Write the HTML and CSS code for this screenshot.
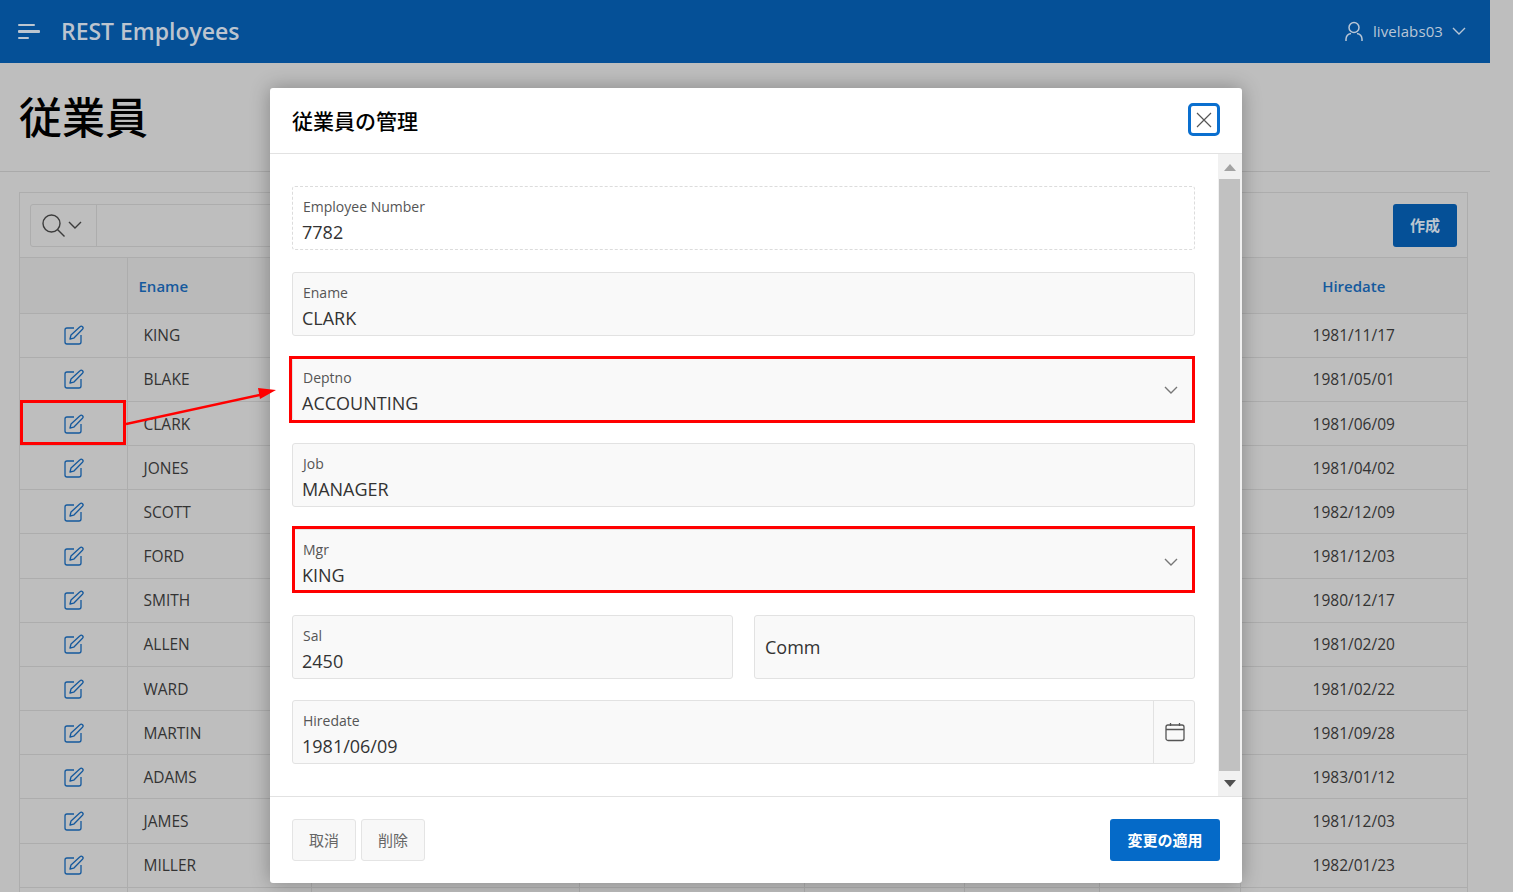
FILE: index.html
```html
<!DOCTYPE html>
<html lang="ja">
<head>
    <meta charset="UTF-8">
    <title>REST Employees</title>
    <link rel="stylesheet" href="styles.css">
</head>
<body>

<svg class="defs" width="0" height="0">
    <symbol id="edit" viewBox="0 0 20 20">
        <path d="M10 3H3a2 2 0 0 0-2 2v12a2 2 0 0 0 2 2h12a2 2 0 0 0 2-2v-7" fill="none" stroke="currentColor" stroke-width="1.3"/>
        <path d="M6 14l1-4 9-8.200a1.700 1.700 0 0 1 2.500 2.500l-8.800 8.900z" fill="none" stroke="currentColor" stroke-width="1.3" stroke-linejoin="round"/>
    </symbol>
    <symbol id="chevron" viewBox="0 0 14 8">
        <path d="M1 1l6 6 6-6" fill="none" stroke="currentColor" stroke-width="1.400"/>
    </symbol>
</svg>

<div class="page">
    <header class="topbar">
        <div class="menu-icon"><span></span><span></span><span></span></div>
        <span class="app-name">REST Employees</span>
        <div class="user">
            <svg class="user-icon" viewBox="0 0 18 20" width="18" height="20">
                <circle cx="9" cy="6.500" r="5" fill="none" stroke="currentColor" stroke-width="1.500"/>
                <path d="M1 20v-2a6 6 0 0 1 5-5.500M17 20v-2a6 6 0 0 0-5-5.500" fill="none" stroke="currentColor" stroke-width="1.500"/>
            </svg>
            <span class="user-name">livelabs03</span>
            <svg class="user-chevron"><use href="#chevron"/></svg>
        </div>
    </header>

    <div class="title-bar">
        <h1>従業員</h1>
    </div>

    <section class="report">
        <div class="toolbar">
            <div class="search">
                <div class="search-btn">
                    <svg viewBox="0 0 24 24" width="24" height="24">
                        <circle cx="10.500" cy="10.500" r="8.500" fill="none" stroke="#3c3c3c" stroke-width="1.400"/>
                        <path d="M16.500 16.500l7 7" stroke="#3c3c3c" stroke-width="1.400"/>
                    </svg>
                    <svg class="search-chevron"><use href="#chevron"/></svg>
                </div>
            </div>
            <a class="create-btn">作成</a>
        </div>
        <table class="grid">
            <colgroup>
                <col class="c-edit"><col class="c-ename"><col class="c-3"><col class="c-4">
                <col class="c-5"><col class="c-6"><col class="c-7"><col class="c-date">
            </colgroup>
            <thead>
                <tr>
                    <th></th><th class="left">Ename</th><th></th><th></th><th></th><th></th><th></th><th>Hiredate</th>
                </tr>
            </thead>
            <tbody>
                <tr><td class="ic"><svg><use href="#edit"/></svg></td><td class="name">KING</td><td></td><td></td><td></td><td></td><td></td><td>1981/11/17</td></tr>
                <tr><td class="ic"><svg><use href="#edit"/></svg></td><td class="name">BLAKE</td><td></td><td></td><td></td><td></td><td></td><td>1981/05/01</td></tr>
                <tr><td class="ic"><svg><use href="#edit"/></svg></td><td class="name">CLARK</td><td></td><td></td><td></td><td></td><td></td><td>1981/06/09</td></tr>
                <tr><td class="ic"><svg><use href="#edit"/></svg></td><td class="name">JONES</td><td></td><td></td><td></td><td></td><td></td><td>1981/04/02</td></tr>
                <tr><td class="ic"><svg><use href="#edit"/></svg></td><td class="name">SCOTT</td><td></td><td></td><td></td><td></td><td></td><td>1982/12/09</td></tr>
                <tr><td class="ic"><svg><use href="#edit"/></svg></td><td class="name">FORD</td><td></td><td></td><td></td><td></td><td></td><td>1981/12/03</td></tr>
                <tr><td class="ic"><svg><use href="#edit"/></svg></td><td class="name">SMITH</td><td></td><td></td><td></td><td></td><td></td><td>1980/12/17</td></tr>
                <tr><td class="ic"><svg><use href="#edit"/></svg></td><td class="name">ALLEN</td><td></td><td></td><td></td><td></td><td></td><td>1981/02/20</td></tr>
                <tr><td class="ic"><svg><use href="#edit"/></svg></td><td class="name">WARD</td><td></td><td></td><td></td><td></td><td></td><td>1981/02/22</td></tr>
                <tr><td class="ic"><svg><use href="#edit"/></svg></td><td class="name">MARTIN</td><td></td><td></td><td></td><td></td><td></td><td>1981/09/28</td></tr>
                <tr><td class="ic"><svg><use href="#edit"/></svg></td><td class="name">ADAMS</td><td></td><td></td><td></td><td></td><td></td><td>1983/01/12</td></tr>
                <tr><td class="ic"><svg><use href="#edit"/></svg></td><td class="name">JAMES</td><td></td><td></td><td></td><td></td><td></td><td>1981/12/03</td></tr>
                <tr><td class="ic"><svg><use href="#edit"/></svg></td><td class="name">MILLER</td><td></td><td></td><td></td><td></td><td></td><td>1982/01/23</td></tr>
                <tr><td></td><td></td><td></td><td></td><td></td><td></td><td></td><td></td></tr>
            </tbody>
        </table>
    </section>
</div>

<div class="modal">
    <div class="modal-head">
        <h2>従業員の管理</h2>
        <a class="close-btn">
            <svg viewBox="0 0 16 16" width="16" height="16">
                <path d="M1 1l14 14M15 1L1 15" stroke="#555" stroke-width="1.200"/>
            </svg>
        </a>
    </div>
    <div class="modal-body">
        <form class="form">
            <div class="field readonly">
                <label>Employee Number</label>
                <div class="value">7782</div>
            </div>
            <div class="field">
                <label>Ename</label>
                <div class="value">CLARK</div>
            </div>
            <div class="field select">
                <label>Deptno</label>
                <div class="value">ACCOUNTING</div>
                <svg class="select-chevron"><use href="#chevron"/></svg>
            </div>
            <div class="field">
                <label>Job</label>
                <div class="value">MANAGER</div>
            </div>
            <div class="field select">
                <label>Mgr</label>
                <div class="value">KING</div>
                <svg class="select-chevron"><use href="#chevron"/></svg>
            </div>
            <div class="field-row">
                <div class="field">
                    <label>Sal</label>
                    <div class="value">2450</div>
                </div>
                <div class="field empty">
                    <div class="value">Comm</div>
                </div>
            </div>
            <div class="field date">
                <div class="date-main">
                    <label>Hiredate</label>
                    <div class="value">1981/06/09</div>
                </div>
                <div class="date-btn">
                    <svg viewBox="0 0 20 20" width="20" height="20">
                        <rect x="1" y="3" width="18" height="15.500" rx="2" fill="none" stroke="#555" stroke-width="1.300"/>
                        <path d="M1 7.500h18M5.500 1v3M14.500 1v3" stroke="#555" stroke-width="1.300"/>
                    </svg>
                </div>
            </div>
        </form>
        <div class="scrollbar">
            <div class="arrow up"></div>
            <div class="thumb"></div>
            <div class="arrow down"></div>
        </div>
    </div>
    <div class="modal-foot">
        <a class="btn">取消</a>
        <a class="btn">削除</a>
        <a class="btn primary">変更の適用</a>
    </div>
</div>

<!-- red notes drawn over the screenshot -->
<div class="mark mark-row"></div>
<div class="mark mark-dept"></div>
<div class="mark mark-mgr"></div>
<svg class="mark-arrow" width="160" height="50" viewBox="0 0 160 50">
    <path d="M0 36L138 6" stroke="#f00" stroke-width="2.500"/>
    <path d="M150 2L132 0l2 11z" fill="#f00"/>
</svg>

</body>
</html>
```

FILE: styles.css
```css
* {
    box-sizing: border-box;
}
html, body {
    height: 892px;
    overflow: hidden;
}
body {
    background: #bebebe;
    color: #333;
    font-family: "Open Sans", "Noto Sans CJK JP", sans-serif;
    margin: 0;
    position: relative;
}
.defs {
    position: absolute;
}
.page {
    width: 1490px;
}

/* header */
.topbar {
    align-items: center;
    background: #055097;
    color: #b9c6d6;
    display: flex;
    height: 63px;
    padding: 0 24px 0 18px;
}
.menu-icon {
    display: flex;
    flex-direction: column;
    gap: 4px;
    margin-right: 21px;
    width: 22px;
}
.menu-icon span {
    background: #bcc6d0;
    border-radius: 1px;
    display: block;
    height: 2.500px;
}
.menu-icon span:nth-child(1) {
    width: 17px;
}
.menu-icon span:nth-child(3) {
    width: 11px;
}
.app-name {
    color: #bcc4cf;
    font-size: 23px;
    font-weight: 600;
    letter-spacing: -0.02px;
    line-height: 28px;
    margin-bottom: 2px;
}
.user {
    align-items: center;
    display: flex;
    margin-bottom: 1px;
    margin-left: auto;
}
.user-icon {
    margin-right: 10px;
}
.user-name {
    font-size: 15px;
    letter-spacing: 0.1px;
    margin-right: 9px;
}
.user-chevron {
    height: 8px;
    width: 14px;
}

/* title */
.title-bar {
    border-bottom: 1px solid #aaa;
    height: 109px;
    padding: 30px 20px 0;
}
h1 {
    color: #000;
    font-size: 43px;
    font-weight: 500;
    line-height: 50px;
    margin: 0 0 0 -1px;
}

/* report */
.report {
    border: 1px solid #adadad;
    border-bottom: 0;
    margin: 20px 22px 0 19px;
}
.toolbar {
    align-items: center;
    display: flex;
    height: 64px;
    justify-content: space-between;
    padding: 0 10px;
}
.search {
    border: 1px solid #adadad;
    border-radius: 3px;
    height: 43px;
    width: 500px;
}
.search-btn {
    align-items: center;
    border-right: 1px solid #adadad;
    display: flex;
    gap: 3px;
    height: 41px;
    padding-left: 10px;
    width: 66px;
}
.search-chevron {
    color: #3c3c3c;
    height: 8px;
    width: 14px;
}
.create-btn {
    align-items: center;
    background: #055097;
    border-radius: 3px;
    color: #bcc6d0;
    display: flex;
    font-size: 15px;
    font-weight: 700;
    height: 43px;
    justify-content: center;
    padding-bottom: 2px;
    width: 64px;
}
.grid {
    border-collapse: collapse;
    table-layout: fixed;
    width: 1447px;
}
.c-edit { width: 107px; }
.c-ename { width: 184px; }
.c-3 { width: 268px; }
.c-4 { width: 225px; }
.c-5 { width: 160px; }
.c-6 { width: 135px; }
.c-7 { width: 141px; }
.c-date { width: 227px; }
.grid th, .grid td {
    border: 1px solid #adadad;
    font-size: 15.500px;
    padding: 0;
    text-align: center;
}
.grid tr > :first-child {
    border-left: 0;
}
.grid tr > :last-child {
    border-right: 0;
}
.grid th {
    background: #bababa;
    color: #15599d;
    font-size: 15px;
    font-weight: 600;
    height: 55.700px;
    padding-top: 2px;
}
.grid th.left {
    padding-left: 11px;
    text-align: left;
}
.grid td {
    color: #333;
    height: 44.170px;
}
.grid td.name {
    padding-left: 16px;
    text-align: left;
}
.grid td.ic {
    color: #15599d;
    padding-left: 1px;
}
.ic svg {
    display: block;
    height: 20px;
    margin: 0 auto;
    width: 20px;
}

/* dialog */
.modal {
    background: #fff;
    border-radius: 3px;
    box-shadow: 0 0 20px rgba(0, 0, 0, 0.3);
    display: flex;
    flex-direction: column;
    height: 795px;
    left: 270px;
    position: absolute;
    top: 88px;
    width: 972px;
}
.modal-head {
    align-items: center;
    border-bottom: 1px solid #e2e2e2;
    display: flex;
    flex: none;
    height: 66px;
    justify-content: space-between;
    padding: 0 22px 2px;
}
h2 {
    color: #000;
    font-size: 21px;
    font-weight: 500;
    margin: 0;
}
.close-btn {
    align-items: center;
    border: 3px solid #0a6fcf;
    border-radius: 5px;
    display: flex;
    height: 33px;
    justify-content: center;
    width: 32px;
}
.modal-body {
    display: flex;
    flex: 1;
    min-height: 0;
}
.form {
    flex: 1;
    padding: 32px 23px 0 22px;
}
.field {
    background: #f9f9f9;
    border: 1px solid #e2e2e2;
    border-radius: 3px;
    height: 64px;
    margin-bottom: 21.720px;
    padding: 10px 10px 0;
    position: relative;
}
.field.readonly {
    background: #fff;
    border: 1px dashed #dcdcdc;
}
.field label {
    color: #555;
    display: block;
    font-size: 14px;
    line-height: 19px;
}
.value {
    color: #333;
    font-size: 18px;
    line-height: 30px;
    margin: 1px 0 0 -1px;
}
.select-chevron {
    color: #777;
    height: 8px;
    position: absolute;
    right: 16px;
    top: 28px;
    width: 14px;
}
.field-row {
    display: flex;
    gap: 21px;
}
.field-row .field {
    flex: 1;
}
.field.empty {
    align-items: center;
    display: flex;
    padding-top: 0;
}
.field.empty .value {
    margin: 0;
}
.field.date {
    display: flex;
    padding: 0;
}
.date-main {
    flex: 1;
    padding: 10px 10px 0;
}
.date-btn {
    align-items: center;
    border-left: 1px solid #e2e2e2;
    display: flex;
    justify-content: center;
    padding-left: 1px;
    width: 41px;
}
.scrollbar {
    background: #f1f1f1;
    display: flex;
    flex-direction: column;
    padding: 0 2px 0 1px;
    width: 24px;
}
.thumb {
    background: #c1c1c1;
    flex: 1;
}
.arrow {
    flex: none;
    height: 25px;
    position: relative;
}
.arrow::after {
    border-left: 6px solid transparent;
    border-right: 6px solid transparent;
    content: "";
    left: 5px;
    position: absolute;
}
.arrow.up::after {
    border-bottom: 7px solid #a3a3a3;
    top: 10px;
}
.arrow.down::after {
    border-top: 7px solid #505050;
    top: 9px;
}
.modal-foot {
    align-items: center;
    border-top: 1px solid #e2e2e2;
    display: flex;
    flex: none;
    gap: 5px;
    height: 87px;
    padding: 0 22px;
}
.btn {
    align-items: center;
    background: #f8f8f8;
    border: 1px solid #e4e4e4;
    border-radius: 3px;
    color: #666;
    display: flex;
    font-size: 15px;
    height: 42px;
    justify-content: center;
    padding-bottom: 2px;
    width: 64px;
}
.btn.primary {
    background: #056ac8;
    border: 0;
    color: #fff;
    font-weight: 700;
    margin-left: auto;
    width: 110px;
}

/* annotations */
.mark {
    border: 3px solid #f00;
    position: absolute;
}
.mark-row {
    height: 45px;
    left: 20px;
    top: 400px;
    width: 106px;
}
.mark-dept {
    height: 67px;
    left: 289px;
    top: 356px;
    width: 906px;
}
.mark-mgr {
    height: 67px;
    left: 292px;
    top: 526px;
    width: 903px;
}
.mark-arrow {
    left: 126px;
    position: absolute;
    top: 388px;
}
```
